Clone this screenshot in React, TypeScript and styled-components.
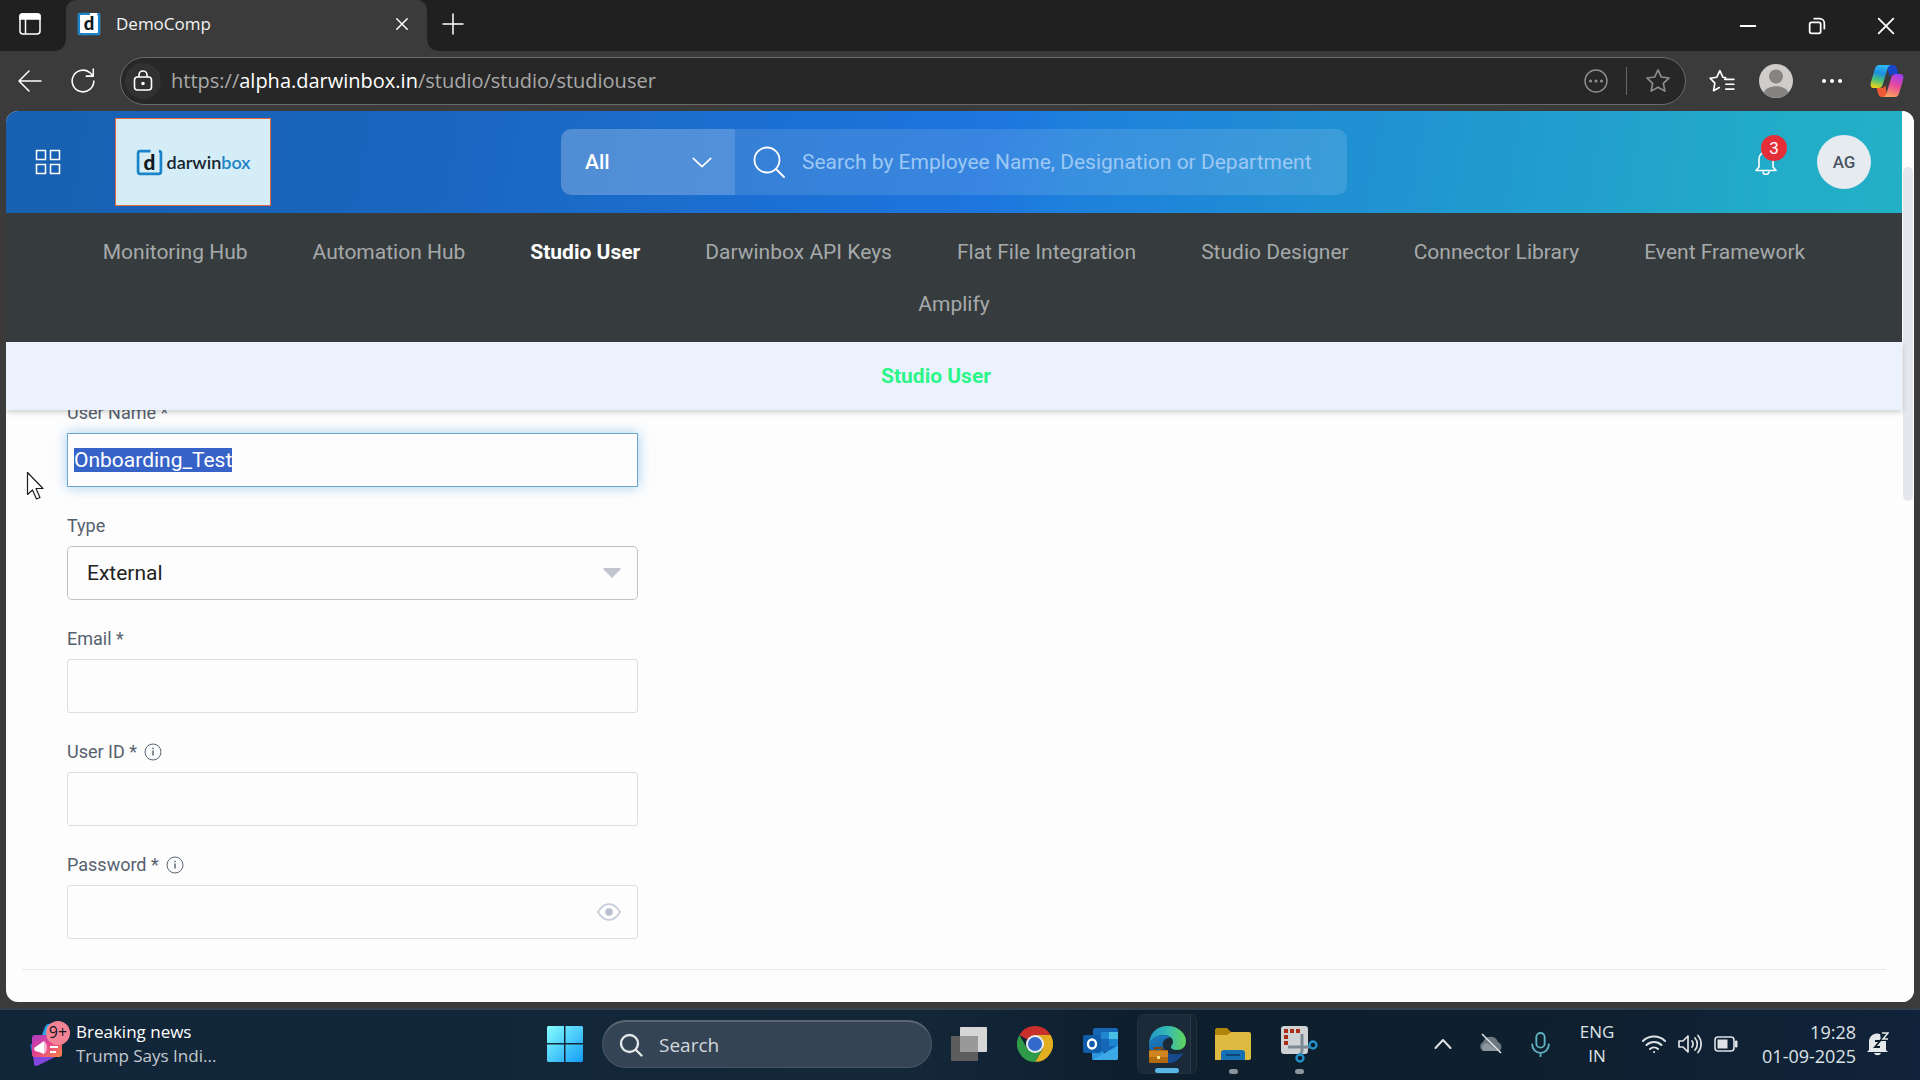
import React, { useEffect, useRef } from "react";
import styled, { createGlobalStyle, css } from "styled-components";

const roboto = `Roboto, "Liberation Sans", sans-serif`;
const system = `"Open Sans", "Noto Sans", sans-serif`;

const GlobalStyle = createGlobalStyle`
  *, *::before, *::after { box-sizing: border-box; }
  body { margin: 0; background: #3b3b3b; font-family: ${system}; overflow: hidden; }
  button, input, select { font: inherit; color: inherit; margin: 0; }
  button { background: none; border: 0; padding: 0; }
  svg { display: block; flex: none; }
`;

const Screen = styled.div`
  display: flex;
  flex-direction: column;
  height: 100vh;
  background: #3b3b3b;
`;

/* ---------- browser chrome ---------- */

const TabStrip = styled.header`
  display: flex;
  height: 51px;
  flex: none;
  background: #202020;
  color: #fff;
  > button {
    padding-bottom: 4px;
  }
  > button:first-child {
    padding-left: 4px;
  }
`;

const IconButton = styled.button<{ $w: number }>`
  display: flex;
  align-items: center;
  justify-content: center;
  flex: none;
  width: ${(p) => p.$w}px;
`;

const TabEdge = styled.span<{ $side: "left" | "right" }>`
  align-self: flex-end;
  width: 10px;
  height: 10px;
  background: radial-gradient(
    circle at ${(p) => (p.$side === "left" ? "0 0" : "100% 0")},
    #202020 9px,
    #3b3b3b 10px
  );
`;

const Tab = styled.div`
  display: flex;
  align-items: center;
  gap: 15px;
  width: 361px;
  padding: 0 16px 4px 11px;
  border-radius: 10px 10px 0 0;
  background: #3b3b3b;
  font-size: 17px;
  line-height: 24px;
`;

const TabTitle = styled.span`
  flex: 1;
  color: #f2f2f2;
`;

const WindowButtons = styled.div`
  display: flex;
  margin-left: auto;
`;

const Toolbar = styled.div`
  display: flex;
  align-items: center;
  flex: none;
  height: 60px;
  padding: 0 4px;
  color: #fff;
`;

const Address = styled.div`
  display: flex;
  align-items: center;
  flex: 1;
  height: 48px;
  margin: 0 12px 0 10px;
  padding: 0 4px;
  border: 1px solid #6a6a6a;
  border-radius: 24px;
  background: #272727;
  color: #8f8f8f;
`;

const LockButton = styled.button`
  display: grid;
  place-items: center;
  width: 36px;
  height: 36px;
  margin-right: 10px;
  border-radius: 50%;
  background: #313131;
  color: #fff;
`;

const Url = styled.div`
  flex: 1;
  font-size: 20px;
  line-height: 28px;
  color: #a9a9a9;
  outline: none;
  b {
    font-weight: 400;
    color: #fff;
  }
`;

const AddressRule = styled.span`
  width: 1px;
  height: 28px;
  margin-right: 8px;
  background: #666;
`;

/* ---------- web page ---------- */

const Viewport = styled.div`
  display: flex;
  flex: 1;
  min-height: 0;
  margin: 0 6px 6px;
  border-radius: 12px;
  overflow: hidden;
  background: #fdfdfd;
  font-family: ${roboto};
`;

const Site = styled.div`
  display: flex;
  flex-direction: column;
  flex: 1;
  min-width: 0;
`;

const ScrollTrack = styled.div`
  width: 12px;
  padding: 56px 1px 0;
  background: #fdfdfd;
`;

const ScrollThumb = styled.div`
  height: 40%;
  border-radius: 5px;
  background: #e6e6ee;
`;

const SiteHeader = styled.header`
  display: grid;
  grid-template-columns: 1fr minmax(0, 786px) 1fr;
  align-items: center;
  flex: none;
  height: 102px;
  background: linear-gradient(100deg, #1860b0 0%, #1966bf 22%, #1c6fd2 40%, #1d76de 52%, #1e80dc 56%, #2092d2 72%, #22acc8 93%, #22b0c6 100%);
  color: #fff;
`;

const Brand = styled.div`
  display: flex;
  align-items: center;
  gap: 54px;
  padding-left: 29px;
`;

const Logo = styled.a`
  display: flex;
  align-items: center;
  justify-content: center;
  gap: 4px;
  width: 156px;
  height: 88px;
  border: 1px solid #e2693c;
  background: #d4edf7;
  color: #16242e;
  font: 600 18px/24px Lato, ${roboto};
  text-decoration: none;
  em {
    font-style: normal;
    color: #1f84c6;
  }
`;

const SiteSearch = styled.form`
  display: flex;
  height: 66px;
  border-radius: 10px;
  overflow: hidden;
  font-size: 21px;
`;

const Scope = styled.label`
  display: grid;
  flex: none;
  width: 174px;
  align-items: center;
  background: rgba(255, 255, 255, 0.24);
  > * {
    grid-area: 1 / 1;
  }
  svg {
    justify-self: end;
    margin-right: 22px;
    pointer-events: none;
  }
  select {
    width: 100%;
    height: 100%;
    padding: 0 24px;
    border: 0;
    appearance: none;
    background: transparent;
    font-weight: 500;
  }
`;

const Query = styled.label`
  display: flex;
  align-items: center;
  gap: 17px;
  flex: 1;
  padding: 0 18px;
  background: rgba(255, 255, 255, 0.12);
  input {
    flex: 1;
    min-width: 0;
    height: 100%;
    padding: 0;
    border: 0;
    background: transparent;
    outline: none;
  }
  input::placeholder {
    color: #9cc8f4;
    opacity: 1;
  }
`;

const Account = styled.div`
  display: flex;
  align-items: center;
  justify-content: flex-end;
  gap: 40px;
  padding-right: 31px;
`;

const Bell = styled.button`
  position: relative;
`;

const Count = styled.span`
  position: absolute;
  left: 6px;
  top: -14px;
  width: 26px;
  height: 26px;
  border-radius: 50%;
  background: #e52f38;
  font-size: 17px;
  line-height: 26px;
  text-align: center;
`;

const Initials = styled.button`
  width: 54px;
  height: 54px;
  border-radius: 50%;
  background: #e6ebf0;
  color: #4a5563;
  font-size: 17px;
  font-weight: 500;
`;

const MainNav = styled.nav`
  display: flex;
  flex-wrap: wrap;
  justify-content: center;
  gap: 0 65px;
  flex: none;
  padding: 13px 60px 12px;
  background: #363c3e;
  font-size: 21px;
  line-height: 52px;
`;

const NavLink = styled.a<{ $active?: boolean }>`
  color: ${(p) => (p.$active ? "#fff" : "#a6a9aa")};
  font-weight: ${(p) => (p.$active ? 700 : 400)};
  text-decoration: none;
`;

const TitleBar = styled.div`
  position: relative;
  z-index: 1;
  flex: none;
  padding-right: 36px;
  background: #ebf2fd;
  box-shadow: 0 2px 6px rgba(0, 0, 0, 0.2);
  text-align: center;
  h1 {
    margin: 0;
    color: #2cf58a;
    font-size: 21px;
    line-height: 68px;
    font-weight: 700;
  }
`;

const Form = styled.form`
  display: flex;
  flex-direction: column;
  gap: 27px;
  margin: -9px 16px 0;
  padding: 0 45px 30px;
  border-bottom: 1px solid #e6e8ec;
`;

const Field = styled.div`
  display: flex;
  flex-direction: column;
  gap: 8px;
  width: 571px;
`;

const LabelRow = styled.div`
  display: flex;
  align-items: center;
  gap: 7px;
  color: #56616e;
  font-size: 18px;
  line-height: 24px;
`;

const control = css`
  width: 100%;
  height: 54px;
  background: #fdfdfd;
  color: #222;
  font-size: 21px;
`;

const TextBox = styled.input<{ $active?: boolean }>`
  ${control}
  padding: 0 6px;
  border: 1px solid ${(p) => (p.$active ? "#6fa6cc" : "#dcdee3")};
  border-radius: ${(p) => (p.$active ? 0 : 3)}px;
  box-shadow: ${(p) => (p.$active ? "0 0 12px rgba(102, 175, 233, 0.6)" : "none")};
  outline: none;
  caret-color: transparent;
  &::selection {
    background: #3763c8;
    color: #fff;
  }
`;

const Picker = styled.div`
  display: grid;
  align-items: center;
  > * {
    grid-area: 1 / 1;
  }
  svg {
    justify-self: end;
    margin-right: 17px;
    pointer-events: none;
  }
  select {
    ${control}
    padding: 0 19px;
    border: 1px solid #bcc2ca;
    border-radius: 5px;
    appearance: none;
  }
`;

const Reveal = styled.button`
  justify-self: end;
`;

const Pointer = styled.svg`
  position: absolute;
  left: 26px;
  top: 471px;
  z-index: 2;
`;

/* ---------- taskbar ---------- */

const Taskbar = styled.footer`
  display: grid;
  grid-template-columns: 1fr auto 588px;
  align-items: center;
  flex: none;
  height: 72px;
  padding-bottom: 2px;
  border-top: 2px solid #33414e;
  background: linear-gradient(90deg, #122639 0%, #132739 48%, #0d1e2d 60%, #0e1f2e 80%, #10233a 100%);
  color: #dfe3e6;
  font-size: 17px;
  line-height: 24px;
`;

const News = styled.button`
  display: flex;
  align-items: center;
  gap: 4px;
  padding-left: 28px;
  text-align: left;
  small {
    display: block;
    font-size: 17px;
    color: #c3c9ce;
  }
  strong {
    display: block;
    font-weight: 400;
    color: #fff;
  }
`;

const Apps = styled.div`
  display: flex;
  align-items: center;
  height: 100%;
`;

const TaskSearch = styled.label`
  display: flex;
  align-items: center;
  gap: 16px;
  width: 330px;
  height: 48px;
  margin: 0 4px;
  padding: 0 16px;
  border: 1px solid #4a5866;
  border-top: 2px solid #5a6673;
  border-radius: 24px;
  background: #354454;
  font-size: 19px;
  input {
    flex: 1;
    min-width: 0;
    border: 0;
    padding: 0;
    background: transparent;
    outline: none;
  }
  input::placeholder {
    color: #d3d8dc;
    opacity: 1;
  }
`;

const AppButton = styled.button<{ $state?: "open" | "active" }>`
  display: grid;
  place-items: center;
  grid-template-rows: 1fr 5px;
  width: 66px;
  height: 60px;
  padding: 5px 0 0;
  &::after {
    content: "";
    width: ${(p) => (p.$state === "active" ? 24 : 9)}px;
    height: 5px;
    border-radius: 3px;
    background: ${(p) => (p.$state === "active" ? "#57b8e8" : p.$state ? "#8b949b" : "transparent")};
  }
  ${(p) =>
    p.$state === "active" &&
    css`
      width: 60px;
      margin: 0 3px;
      border: 1px solid #23313e;
      border-radius: 7px;
      background: linear-gradient(90deg, #1b2a38 52px, #2c3a47 52px 53px, #16242f 53px);
    `}
`;

const Tray = styled.div`
  display: flex;
  align-items: center;
  justify-content: flex-end;
  padding-right: 20px;
`;

const Stack = styled.button<{ $align: "center" | "right"; $w: number }>`
  display: flex;
  flex-direction: column;
  width: ${(p) => p.$w}px;
  font-size: ${(p) => (p.$align === "right" ? 18 : 17)}px;
  text-align: ${(p) => p.$align};
`;

/* ---------- drawings ---------- */

const Line = ({ d, size = 24, w = 1.6, color = "currentColor" }: { d: string; size?: number; w?: number; color?: string }) => (
  <svg width={size} height={size} viewBox="0 0 24 24" fill="none" stroke={color} strokeWidth={w} strokeLinecap="round" strokeLinejoin="round">
    <path d={d} />
  </svg>
);

const Mark = ({ size, paper }: { size: number; paper: string }) => (
  <svg width={size} height={size} viewBox="0 0 26 26">
    <rect x="1" y="1" width="24" height="24" rx="2" fill={paper} />
    <path d="M14 2H4a2 2 0 0 0-2 2v18a2 2 0 0 0 2 2h18a2 2 0 0 0 2-2V4a2 2 0 0 0-2-2" fill="none" stroke="#1b84c9" strokeWidth="2.600" />
    <text x="13" y="20" textAnchor="middle" fontFamily="Lato, sans-serif" fontWeight="900" fontSize="20" fill="#101a20">d</text>
  </svg>
);

const star = "M12 2.5l2.9 6.1 6.6.8-4.9 4.6 1.3 6.7-5.9-3.3-5.9 3.3 1.3-6.7-4.9-4.6 6.6-.8z";

const Info = () => (
  <svg width="18" height="18" viewBox="0 0 18 18" fill="none" stroke="#5b6673" strokeWidth="1">
    <circle cx="9" cy="9" r="8" />
    <path d="M9 7.5v5M9 4.8v1.4" strokeWidth="1.5" />
  </svg>
);

const Copilot = () => (
  <svg width="34" height="34" viewBox="0 0 34 34">
    <defs>
      <linearGradient id="cpA" x1="0.5" y1="0" x2="0.3" y2="1">
        <stop offset="0" stopColor="#2fb8f5" />
        <stop offset="0.35" stopColor="#1d8fe0" />
        <stop offset="0.65" stopColor="#49c07a" />
        <stop offset="1" stopColor="#f2d219" />
      </linearGradient>
      <linearGradient id="cpB" x1="0.7" y1="0" x2="0.4" y2="1">
        <stop offset="0" stopColor="#a03df0" />
        <stop offset="0.5" stopColor="#e84a9a" />
        <stop offset="1" stopColor="#fba35c" />
      </linearGradient>
    </defs>
    <path d="M17 1h6c2 0 3 1 4 4l1.500 5h-5c-2 0-3 1-4 3z" fill="#1746c8" />
    <path d="M17 33h-5c-2 0-3-1-4-4l-1.500-5h5c2 0 3-1 4-3z" fill="#ee5a35" />
    <path d="M9 1h12c-2 .5-3 2-3.600 4l-4.500 15c-.8 3-2 4-4.400 4H4c-3 0-4-2-3-6L4.500 6C5.400 3 6.500 1 9 1z" fill="url(#cpA)" />
    <path d="M25 33H13c2-.5 3-2 3.600-4l4.500-15c.8-3 2-4 4.400-4H30c3 0 4 2 3 6l-3.500 12c-.9 3-2 5-4.500 5z" fill="url(#cpB)" />
  </svg>
);

const NewsIcon = () => (
  <svg width="44" height="46" viewBox="0 0 44 46">
    <defs>
      <linearGradient id="nw" x1="0" y1="0" x2="1" y2="1">
        <stop offset="0" stopColor="#a93bc4" />
        <stop offset="0.5" stopColor="#e8458c" />
        <stop offset="1" stopColor="#f58a3c" />
      </linearGradient>
    </defs>
    <path d="M5 35l22 1-16 8c-4 2-5 1-5-2z" fill="#8347e0" />
    <path d="M2 24l3-2v14z" fill="#3c62c4" />
    <path d="M17 6l-3 8h10V3c-3-1-6 0-7 3z" fill="#2aa3e8" />
    <rect x="4" y="14" width="30" height="22" rx="3" fill="url(#nw)" />
    <path d="M6 27l10-7v13l-5-2-4-1z" fill="#fff" />
    <path d="M16 20c4 3 4 10 0 13z" fill="#f9b7d4" />
    <path d="M22 26h8M22 31h6" stroke="#fff" strokeWidth="2" />
    <circle cx="30" cy="12" r="12" fill="#f48396" />
    <text x="30" y="17" textAnchor="middle" fontFamily="Open Sans, sans-serif" fontSize="16" fill="#15191c">9+</text>
  </svg>
);

const StartIcon = () => (
  <svg width="36" height="36" viewBox="0 0 36 36">
    <defs>
      <linearGradient id="win" x1="0" y1="0" x2="1" y2="1">
        <stop offset="0" stopColor="#86fdff" />
        <stop offset="1" stopColor="#139df5" />
      </linearGradient>
    </defs>
    <path d="M1 0h16v17H0V1zM18.500 0H35l1 1v16H18.500zM0 18.500h17V36H1l-1-1zM18.500 18.500H36V35l-1 1H18.500z" fill="url(#win)" />
  </svg>
);

const TaskViewIcon = () => (
  <svg width="36" height="36" viewBox="0 0 36 36">
    <rect x="9" y="1" width="27" height="25" rx="1" fill="#d6d6d6" />
    <rect x="0" y="10" width="27" height="25" rx="1" fill="#5d5d5d" />
    <rect x="9" y="10" width="18" height="16" fill="#999" />
  </svg>
);

const ChromeIcon = () => (
  <svg width="36" height="36" viewBox="0 0 36 36">
    <path d="M18 18L2.400 9A18 18 0 0 1 33.600 9z" fill="#c9302c" />
    <path d="M18 18V9h15.600A18 18 0 0 1 18 36l7.800-13.500z" fill="#e2ad1e" />
    <path d="M18 27l7.800-4.500L18 36A18 18 0 0 1 2.400 9l7.800 13.500z" fill="#2f9a47" />
    <circle cx="18" cy="18" r="9" fill="#e9eef2" />
    <circle cx="18" cy="18" r="7" fill="#3369c8" />
  </svg>
);

const OutlookIcon = () => (
  <svg width="36" height="34" viewBox="0 0 36 34">
    <rect x="10" y="1" width="25" height="24" rx="2" fill="#1566b5" />
    <path d="M18 5h8v7h-8z" fill="#1f86cf" />
    <path d="M26 5h9v7h-9z" fill="#49bfe6" />
    <path d="M26 12h9v7h-9z" fill="#1d85d0" />
    <path d="M9 19l13 7 13-8v13a2 2 0 0 1-2 2H11a2 2 0 0 1-2-2z" fill="#2b95dd" />
    <path d="M9 33l26-14v12a2 2 0 0 1-2 2z" fill="#3ba9e8" />
    <rect x="0" y="8" width="18" height="18" rx="2" fill="#0f5ca8" />
    <ellipse cx="9" cy="17" rx="4" ry="4.500" fill="none" stroke="#fff" strokeWidth="2.400" />
  </svg>
);

const EdgeIcon = () => (
  <svg width="37" height="37" viewBox="0 0 37 37">
    <defs>
      <linearGradient id="edT" x1="0" y1="0.500" x2="1" y2="0.500">
        <stop offset="0" stopColor="#2197c8" />
        <stop offset="0.5" stopColor="#35b9b4" />
        <stop offset="1" stopColor="#62d65a" />
      </linearGradient>
      <linearGradient id="edM" x1="0" y1="0" x2="0.500" y2="1">
        <stop offset="0" stopColor="#1d80c4" />
        <stop offset="1" stopColor="#115299" />
      </linearGradient>
    </defs>
    <path d="M18.500 0C30 0 37 8 37 15c0 6-4 9-9 9-4 0-6-1-6-3s2-2 2-5c0-4-4-7-9-7C8 9 1 13 0 19 0 7 8 0 18.500 0z" fill="url(#edT)" />
    <path d="M0 19C1 13 8 9 15 9c3 0 5 1 7 3-5-1-9 3-8 8 1 7 10 11 20 7-3 6-8 10-15 10C8 37 0 29 0 19z" fill="url(#edM)" />
    <path d="M14 20c1 7 10 11 20 7-3 6-8 10-15 10-4-4-6-11-5-17z" fill="#174a8c" />
    <rect x="0" y="24" width="19" height="13" rx="1" fill="#b06a10" />
    <path d="M0 25h19v6H0z" fill="#cf8420" />
    <path d="M6 24v-2h7v2" fill="none" stroke="#7c4708" strokeWidth="2" />
    <path d="M8 30h3v3H8z" fill="#ffdf86" />
  </svg>
);

const FolderIcon = () => (
  <svg width="36" height="34" viewBox="0 0 36 34">
    <path d="M0 3c0-1 1-2 2-2h10l4 4-3 4H0z" fill="#b08408" />
    <path d="M0 8h12l4-3h18a2 2 0 0 1 2 2v24a2 2 0 0 1-2 2H0z" fill="#dfba40" />
    <path d="M6 33V26a3 3 0 0 1 3-3h18a3 3 0 0 1 3 3v7z" fill="#1670b4" />
    <path d="M11 28h14" stroke="#0d4678" strokeWidth="2" />
  </svg>
);

const SnipIcon = () => (
  <svg width="37" height="37" viewBox="0 0 37 37">
    <rect x="0" y="0" width="27" height="28" rx="3" fill="#cfd2d4" />
    <path d="M3 5h16" stroke="#ab2c12" strokeWidth="4" strokeDasharray="4 2" />
    <path d="M5 9v10" stroke="#ab2c12" strokeWidth="4" strokeDasharray="4 2" />
    <path d="M21 8v17l-2 5M7 21h22" stroke="#7c8a93" strokeWidth="3" fill="none" />
    <circle cx="32" cy="19" r="3.500" fill="none" stroke="#248fc4" strokeWidth="2.400" />
    <circle cx="19" cy="32" r="3.500" fill="none" stroke="#248fc4" strokeWidth="2.400" />
  </svg>
);

/* ---------- page ---------- */

const sections = [
  "Monitoring Hub",
  "Automation Hub",
  "Studio User",
  "Darwinbox API Keys",
  "Flat File Integration",
  "Studio Designer",
  "Connector Library",
  "Event Framework",
  "Amplify",
];

export default function App() {
  const nameBox = useRef<HTMLInputElement>(null);
  useEffect(() => {
    nameBox.current?.focus({ preventScroll: true });
    nameBox.current?.select();
  }, []);

  return (
    <Screen>
      <GlobalStyle />
      <TabStrip>
        <IconButton $w={56} aria-label="Tab actions">
          <svg width="22" height="22" viewBox="0 0 22 22" fill="none" stroke="#fff" strokeWidth="1.500">
            <rect x="1" y="1" width="20" height="20" rx="3" />
            <path d="M1 3a2 2 0 0 1 2-2h16a2 2 0 0 1 2 2v3H1z" fill="#fff" />
            <path d="M6.500 6v15" />
          </svg>
        </IconButton>
        <TabEdge $side="left" />
        <Tab>
          <Mark size={24} paper="#fff" />
          <TabTitle>DemoComp</TabTitle>
          <IconButton $w={18} aria-label="Close tab">
            <Line d="M5 5l14 14M19 5L5 19" size={18} w={1.9} />
          </IconButton>
        </Tab>
        <TabEdge $side="right" />
        <IconButton $w={32} aria-label="New tab">
          <Line d="M12 2v20M2 12h20" size={24} w={1.5} />
        </IconButton>
        <WindowButtons>
          <IconButton $w={69} aria-label="Minimize"><Line d="M4 12h16" size={22} w={2} /></IconButton>
          <IconButton $w={69} aria-label="Restore">
            <Line d="M6 8h8a2 2 0 0 1 2 2v8a2 2 0 0 1-2 2H6a2 2 0 0 1-2-2v-8a2 2 0 0 1 2-2zM9 4h6a5 5 0 0 1 5 5v6" size={22} w={1.9} />
          </IconButton>
          <IconButton $w={69} aria-label="Close"><Line d="M4 4l16 16M20 4L4 20" size={22} w={2} /></IconButton>
        </WindowButtons>
      </TabStrip>

      <Toolbar>
        <IconButton $w={52} aria-label="Back"><Line d="M23 12H1M11 2L1 12l10 10" size={24} w={1.5} /></IconButton>
        <IconButton $w={54} aria-label="Refresh">
          <Line d="M22 12a10 10 0 1 1-4-8l3 3M21.500 1v6.500H15" size={26} w={1.4} />
        </IconButton>
        <Address>
          <LockButton aria-label="Site information">
            <svg width="20" height="22" viewBox="0 0 20 22" fill="none" stroke="#fff" strokeWidth="1.600">
              <rect x="1.500" y="7" width="17" height="13" rx="3" />
              <path d="M6 7V5a4 4 0 0 1 8 0v2" />
              <circle cx="10" cy="13.500" r="1" fill="#fff" />
            </svg>
          </LockButton>
          <Url role="textbox" aria-label="Address">
            https://<b>alpha.darwinbox.in</b>/studio/studio/studiouser
          </Url>
          <IconButton $w={60} aria-label="Site actions">
            <svg width="24" height="24" viewBox="0 0 24 24" fill="none" stroke="#8f8f8f" strokeWidth="1.400">
              <circle cx="12" cy="12" r="11" />
              <path d="M6.500 12h.1M12 12h.1M17.500 12h.1" strokeWidth="3" strokeLinecap="round" />
            </svg>
          </IconButton>
          <AddressRule />
          <IconButton $w={46} aria-label="Add to favorites"><Line d={star} size={28} w={1.4} /></IconButton>
        </Address>
        <IconButton $w={48} aria-label="Favorites">
          <Line d="M15.500 9l-2.600-.4L10 2.500 7.100 8.600l-6.100.8 4.400 4.600L4.200 21l5.300-3M14.500 10.500H23M15.500 15H23M15.500 19.500H23" size={26} w={1.5} />
        </IconButton>
        <IconButton $w={60} aria-label="Profile">
          <svg width="34" height="34" viewBox="0 0 34 34">
            <circle cx="17" cy="17" r="17" fill="#cfcdcb" />
            <circle cx="17" cy="12.500" r="7" fill="#868482" />
            <path d="M4.500 28.500C8 20 26 20 29.500 28.500a17 17 0 0 1-25 0z" fill="#868482" />
          </svg>
        </IconButton>
        <IconButton $w={52} aria-label="Settings and more">
          <Line d="M4 12h.1M12 12h.1M20 12h.1" size={24} w={4} />
        </IconButton>
        <IconButton $w={58} aria-label="Copilot"><Copilot /></IconButton>
      </Toolbar>

      <Viewport>
        <Site>
          <SiteHeader>
            <Brand>
              <IconButton $w={26} aria-label="Menu">
                <svg width="26" height="26" viewBox="0 0 26 26" fill="none" stroke="#fff" strokeWidth="1.500">
                  <path d="M1.500 1.500h9v9h-9zM15.500 1.500h9v9h-9zM1.500 15.500h9v9h-9zM15.500 15.500h9v9h-9z" />
                </svg>
              </IconButton>
              <Logo href="#home">
                <Mark size={27} paper="#d4edf7" />
                <span>darwin<em>box</em></span>
              </Logo>
            </Brand>
            <SiteSearch>
              <Scope>
                <select aria-label="Search scope"><option>All</option></select>
                <Line d="M2.500 8l9.500 9 9.500-9" size={22} w={1.8} />
              </Scope>
              <Query>
                <svg width="32" height="32" viewBox="0 0 32 32" fill="none" stroke="#fff" strokeWidth="1.800" strokeLinecap="round">
                  <circle cx="14" cy="14" r="12.500" />
                  <path d="M23 23l8 8" />
                </svg>
                <input aria-label="Search employees" placeholder="Search by Employee Name, Designation or Department" />
              </Query>
            </SiteSearch>
            <Account>
              <Bell aria-label="Notifications">
                <svg width="22" height="26" viewBox="0 0 22 26" fill="none" stroke="#fff" strokeWidth="1.600" strokeLinejoin="round">
                  <path d="M4 18V10a7 7 0 0 1 14 0v8l3 3.500H1zM8 22.500a3 3 0 0 0 6 0" />
                </svg>
                <Count>3</Count>
              </Bell>
              <Initials>AG</Initials>
            </Account>
          </SiteHeader>

          <MainNav>
            {sections.map((name) => (
              <NavLink key={name} href="#studio" $active={name === "Studio User"}>{name}</NavLink>
            ))}
          </MainNav>
          <TitleBar><h1>Studio User</h1></TitleBar>

          <Form>
            <Field>
              <LabelRow><label htmlFor="name">User Name *</label></LabelRow>
              <TextBox id="name" ref={nameBox} defaultValue="Onboarding_Test" $active />
            </Field>
            <Field>
              <LabelRow><label htmlFor="type">Type</label></LabelRow>
              <Picker>
                <select id="type"><option>External</option></select>
                <svg width="18" height="10" viewBox="0 0 18 10"><path d="M1 0h16l1 1-9 9-9-9z" fill="#c0c5ce" /></svg>
              </Picker>
            </Field>
            <Field>
              <LabelRow><label htmlFor="email">Email *</label></LabelRow>
              <TextBox id="email" type="email" />
            </Field>
            <Field>
              <LabelRow><label htmlFor="uid">User ID *</label><Info /></LabelRow>
              <TextBox id="uid" />
            </Field>
            <Field>
              <LabelRow><label htmlFor="pwd">Password *</label><Info /></LabelRow>
              <Picker>
                <TextBox id="pwd" type="password" />
                <Reveal type="button" aria-label="Show password">
                  <svg width="24" height="18" viewBox="0 0 24 18">
                    <path d="M1 9c3-5 7-8 11-8s8 3 11 8c-3 5-7 8-11 8S4 14 1 9z" fill="none" stroke="#c3c9d6" strokeWidth="1.500" />
                    <circle cx="12" cy="9" r="3.800" fill="#b9c0d0" />
                  </svg>
                </Reveal>
              </Picker>
            </Field>
          </Form>
        </Site>
        <ScrollTrack><ScrollThumb /></ScrollTrack>
      </Viewport>

      <Taskbar>
        <News>
          <NewsIcon />
          <span>
            <strong>Breaking news</strong>
            <small>Trump Says Indi...</small>
          </span>
        </News>
        <Apps>
          <IconButton $w={66} aria-label="Start"><StartIcon /></IconButton>
          <TaskSearch>
            <svg width="24" height="24" viewBox="0 0 24 24" fill="none" stroke="#e3e6e8" strokeWidth="2.400" strokeLinecap="round">
              <circle cx="10.500" cy="10.500" r="8.500" />
              <path d="M17 17l5.500 5.500" />
            </svg>
            <input aria-label="Search" placeholder="Search" />
          </TaskSearch>
          <AppButton aria-label="Task view"><TaskViewIcon /></AppButton>
          <AppButton aria-label="Chrome"><ChromeIcon /></AppButton>
          <AppButton aria-label="Outlook"><OutlookIcon /></AppButton>
          <AppButton aria-label="Edge" $state="active"><EdgeIcon /></AppButton>
          <AppButton aria-label="File Explorer" $state="open"><FolderIcon /></AppButton>
          <AppButton aria-label="Snipping Tool" $state="open"><SnipIcon /></AppButton>
        </Apps>
        <Tray>
          <IconButton $w={46} aria-label="Hidden icons"><Line d="M4.500 16l7.500-8 7.500 8" size={24} w={2} /></IconButton>
          <IconButton $w={50} aria-label="OneDrive">
            <svg width="26" height="22" viewBox="0 0 26 22">
              <path d="M5 18a5 5 0 0 1 0-9 8 8 0 0 1 15 0 5 5 0 0 1 1 9z" fill="#6d7780" />
              <path d="M5 18a5 5 0 0 1 4-8l11 8z" fill="#8e979e" />
              <path d="M4 1l19 19" stroke="#dfe3e6" strokeWidth="1.600" />
            </svg>
          </IconButton>
          <IconButton $w={48} aria-label="Microphone">
            <Line d="M12 1a4 4 0 0 1 4 4v6a4 4 0 0 1-8 0V5a4 4 0 0 1 4-4zM4 12a8 8 0 0 0 16 0M12 20v3.500" size={25} w={1.8} color="#5fb3c0" />
          </IconButton>
          <Stack $align="center" $w={66}><span>ENG</span><span>IN</span></Stack>
          <IconButton $w={48} aria-label="Network">
            <Line d="M1 9a16 16 0 0 1 22 0M4.500 13a11 11 0 0 1 15 0M8 17a6 6 0 0 1 8 0M12 20h.1" size={24} w={2} />
          </IconButton>
          <IconButton $w={24} aria-label="Volume">
            <Line d="M1 9h4l5-5v16l-5-5H1zM14 9a5 5 0 0 1 0 6M17 6a9 9 0 0 1 0 12M20 3.500a13 13 0 0 1 0 17" size={24} w={1.7} />
          </IconButton>
          <IconButton $w={48} aria-label="Battery">
            <svg width="24" height="16" viewBox="0 0 24 16">
              <rect x="1" y="1" width="19" height="14" rx="3" fill="none" stroke="#dfe3e6" strokeWidth="1.600" />
              <rect x="3.500" y="3.500" width="10" height="9" fill="#dfe3e6" />
              <path d="M21.500 5v6h1.500V5z" fill="#dfe3e6" stroke="#dfe3e6" />
            </svg>
          </IconButton>
          <Stack $align="right" $w={106}><span>19:28</span><span>01-09-2025</span></Stack>
          <IconButton $w={44} aria-label="Do not disturb">
            <svg width="22" height="24" viewBox="0 0 22 24">
              <path d="M2 18V9a8 8 0 0 1 11-7l1 6h5v10l2 2H0zM7 21h7c-1 3-6 3-7 0z" fill="#e6e9eb" />
              <path d="M8 9h5l-5 6h5" fill="none" stroke="#0e1f2e" strokeWidth="1.800" />
              <path d="M15 1h6l-5 6h5" fill="none" stroke="#0e1f2e" strokeWidth="4" />
              <path d="M15 1h6l-5 6h5" fill="none" stroke="#e6e9eb" strokeWidth="1.500" />
            </svg>
          </IconButton>
        </Tray>
      </Taskbar>

      <Pointer width="20" height="30" viewBox="0 0 20 30" aria-hidden="true">
        <path d="M1.500 1.500v22l5-4.500 4 9 3.500-1.500-4-9h7z" fill="#fff" stroke="#1d1d1d" strokeWidth="1.200" strokeLinejoin="round" />
      </Pointer>
    </Screen>
  );
}
